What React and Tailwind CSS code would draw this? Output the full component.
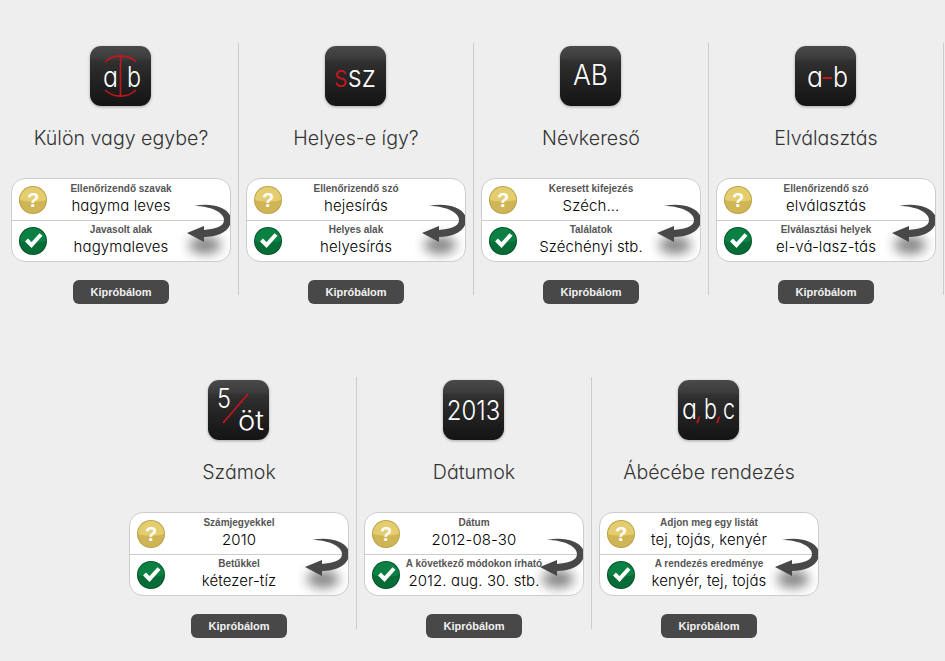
const mavenish = "font-['Inter','Open_Sans',sans-serif] [font-feature-settings:'cv11'] font-light";

const rowOne = [
  { title: 'Külön vagy egybe?', logo: 'split', q: 'Ellenőrizendő szavak', qv: 'hagyma leves', a: 'Javasolt alak', av: 'hagymaleves' },
  { title: 'Helyes-e így?', logo: 'ssz', q: 'Ellenőrizendő szó', qv: 'hejesírás', a: 'Helyes alak', av: 'helyesírás' },
  { title: 'Névkereső', logo: 'ab', q: 'Keresett kifejezés', qv: 'Széch...', a: 'Találatok', av: 'Széchényi stb.' },
  { title: 'Elválasztás', logo: 'hyphen', q: 'Ellenőrizendő szó', qv: 'elválasztás', a: 'Elválasztási helyek', av: 'el-vá-lasz-tás' },
];
const rowTwo = [
  { title: 'Számok', logo: 'num', q: 'Számjegyekkel', qv: '2010', a: 'Betűkkel', av: 'kétezer-tíz' },
  { title: 'Dátumok', logo: 'date', q: 'Dátum', qv: '2012-08-30', a: 'A következő módokon írható', av: '2012. aug. 30. stb.' },
  { title: 'Ábécébe rendezés', logo: 'abc', q: 'Adjon meg egy listát', qv: 'tej, tojás, kenyér', a: 'A rendezés eredménye', av: 'kenyér, tej, tojás' },
];

// the logo lettering is taller and narrower than Inter, so it gets squeezed a bit
function LogoText({ x, y, size, width, children }) {
  return (
    <text x={x} y={y} fontSize={size} textLength={width} lengthAdjust="spacingAndGlyphs" className={`${mavenish} fill-white`}>
      {children}
    </text>
  );
}

function LogoArt({ kind }) {
  if (kind === 'split') return (
    <>
      <path d="M15 16A22 21 0 0 1 46 16M15 44A22 21 0 0 0 46 44M30.5 10V51" fill="none" stroke="#c4161c" strokeWidth="1.6" />
      <LogoText x={13} y={41} size={29} width={15}>a</LogoText>
      <LogoText x={37} y={41} size={29} width={14}>b</LogoText>
    </>
  );
  if (kind === 'ssz') return (
    <text transform="translate(30 41) scale(1 1.1)" fontSize="27" textAnchor="middle" className={`${mavenish} fill-white`}>
      <tspan className="fill-[#c4161c]">s</tspan>sz
    </text>
  );
  if (kind === 'ab') return <LogoText x={13} y={39} size={29} width={35}>AB</LogoText>;
  if (kind === 'hyphen') return (
    <>
      <LogoText x={12} y={41} size={29} width={16}>a</LogoText>
      <rect x="28" y="31" width="9" height="2" fill="#c4161c" />
      <LogoText x={38} y={41} size={29} width={15}>b</LogoText>
    </>
  );
  if (kind === 'num') return (
    <>
      <LogoText x={9} y={28} size={27} width={14}>5</LogoText>
      <path d="M15 43L40 14" stroke="#c4161c" strokeWidth="1.8" />
      <LogoText x={30} y={50} size={27} width={26}>öt</LogoText>
    </>
  );
  if (kind === 'date') return (
    <text transform="translate(30.5 39.5) scale(1 1.15)" fontSize="24" textAnchor="middle" className={`${mavenish} fill-white`}>2013</text>
  );
  return (
    <>
      <LogoText x={4} y={39} size={28} width={15}>a</LogoText>
      <LogoText x={26} y={39} size={28} width={13}>b</LogoText>
      <LogoText x={45} y={39} size={28} width={12}>c</LogoText>
      <path d="M19 43L21.5 36.5M39 43L41.5 36.5" stroke="#c4161c" strokeWidth="1.8" />
    </>
  );
}

function Logo({ kind }) {
  return (
    <div className="mr-[1px] h-[60px] w-[61px] shrink-0 rounded-[11px] shadow-[0_1px_3px_rgba(0,0,0,0.3)] bg-[linear-gradient(#4a4a4a_0%,#3c3c3c_20%,#303030_26%,#222_60%,#141414_100%)]">
      <svg width="61" height="60" viewBox="0 0 61 60">
        <LogoArt kind={kind} />
      </svg>
    </div>
  );
}

function QuestionIcon() {
  return (
    <svg width="28" height="28" viewBox="0 0 28 28">
      <circle cx="14" cy="14" r="14" fill="#bba045" />
      <circle cx="14" cy="14" r="13" fill="#cfb555" />
      <path d="M1 14A13 13 0 0 1 27 14C20 16 8 16 1 14Z" fill="#e4cd6e" />
      <text x="14" y="21" fontSize="20" fontWeight="700" textAnchor="middle" fill="#fff" className="font-['Liberation_Sans',sans-serif]">?</text>
    </svg>
  );
}

function CheckIcon() {
  return (
    <svg width="28" height="28" viewBox="0 0 28 28">
      <circle cx="14" cy="14" r="14" fill="#04522a" />
      <circle cx="14" cy="14" r="13" fill="#076d36" />
      <path d="M1 14A13 13 0 0 1 27 14C20 16 8 16 1 14Z" fill="#0a8043" />
      <path d="M7.5 13L12.5 18L22 7.5" fill="none" stroke="#fff" strokeWidth="4" />
    </svg>
  );
}

function Arrow() {
  return (
    <svg className="absolute left-[168px] top-[16px]" width="52" height="66" viewBox="0 0 52 66">
      <defs>
        <filter id="arrowBlur" x="-80%" y="-120%" width="260%" height="340%">
          <feGaussianBlur stdDeviation="6" />
        </filter>
      </defs>
      <ellipse cx="25" cy="50" rx="16" ry="9" fill="#333" opacity="0.6" filter="url(#arrowBlur)" />
      <path d="M14 11C30 7 51 12 51 25C51 36 38 42 24 42V47L7 38L24 31V35C34 34 44 32 44 25C44 17 30 11 14 11Z" fill="#484848" />
    </svg>
  );
}

function Row({ icon, label, value, height }) {
  return (
    <div className={`grid grid-cols-[36px_1fr_36px] items-center ${height}`}>
      <div className="pl-[7px]">{icon}</div>
      <div className="flex flex-col items-center">
        <span className="whitespace-nowrap text-[10px] font-bold leading-[12px] text-[#555] font-['Liberation_Sans',sans-serif]">{label}</span>
        <span className={`whitespace-nowrap text-[15px] !font-[350] leading-[22px] tracking-[0.1px] text-black ${mavenish}`}>{value}</span>
      </div>
    </div>
  );
}

function Tool({ item, divider }) {
  return (
    <div className={`flex h-[252px] w-[235px] flex-col items-center border-r px-[7px] pt-[3px] ${divider ? 'border-[#ccc]' : 'border-transparent'}`}>
      <Logo kind={item.logo} />
      <h2 className={`mt-[18px] h-[28px] shrink-0 whitespace-nowrap text-[19.6px] leading-[28px] text-[#333] ${mavenish}`}>{item.title}</h2>
      <div className="relative mt-[26px] w-[220px] shrink-0 overflow-hidden rounded-[14px] border border-[#ccc] bg-white">
        <Row icon={<QuestionIcon />} label={item.q} value={item.qv} height="h-[41px]" />
        <div className="h-px bg-[#ccc]" />
        <Row icon={<CheckIcon />} label={item.a} value={item.av} height="h-[40px]" />
        <Arrow />
      </div>
      <button className="mt-[18px] h-[24px] w-[96px] shrink-0 rounded-[6px] bg-[#484848] text-[11px] font-bold text-[#f2f2f2] font-['Liberation_Sans',sans-serif]">
        Kipróbálom
      </button>
    </div>
  );
}

export default function App() {
  return (
    <div className="min-h-[661px] overflow-hidden bg-[#eeeeee] pt-[43px]">
      <div className="flex justify-center pl-[3px]">
        {rowOne.map((item) => (
          <Tool key={item.title} item={item} divider />
        ))}
      </div>
      <div className="mt-[82px] flex justify-center pl-[4px]">
        {rowTwo.map((item, i) => (
          <Tool key={item.title} item={item} divider={i < 2} />
        ))}
      </div>
    </div>
  );
}
